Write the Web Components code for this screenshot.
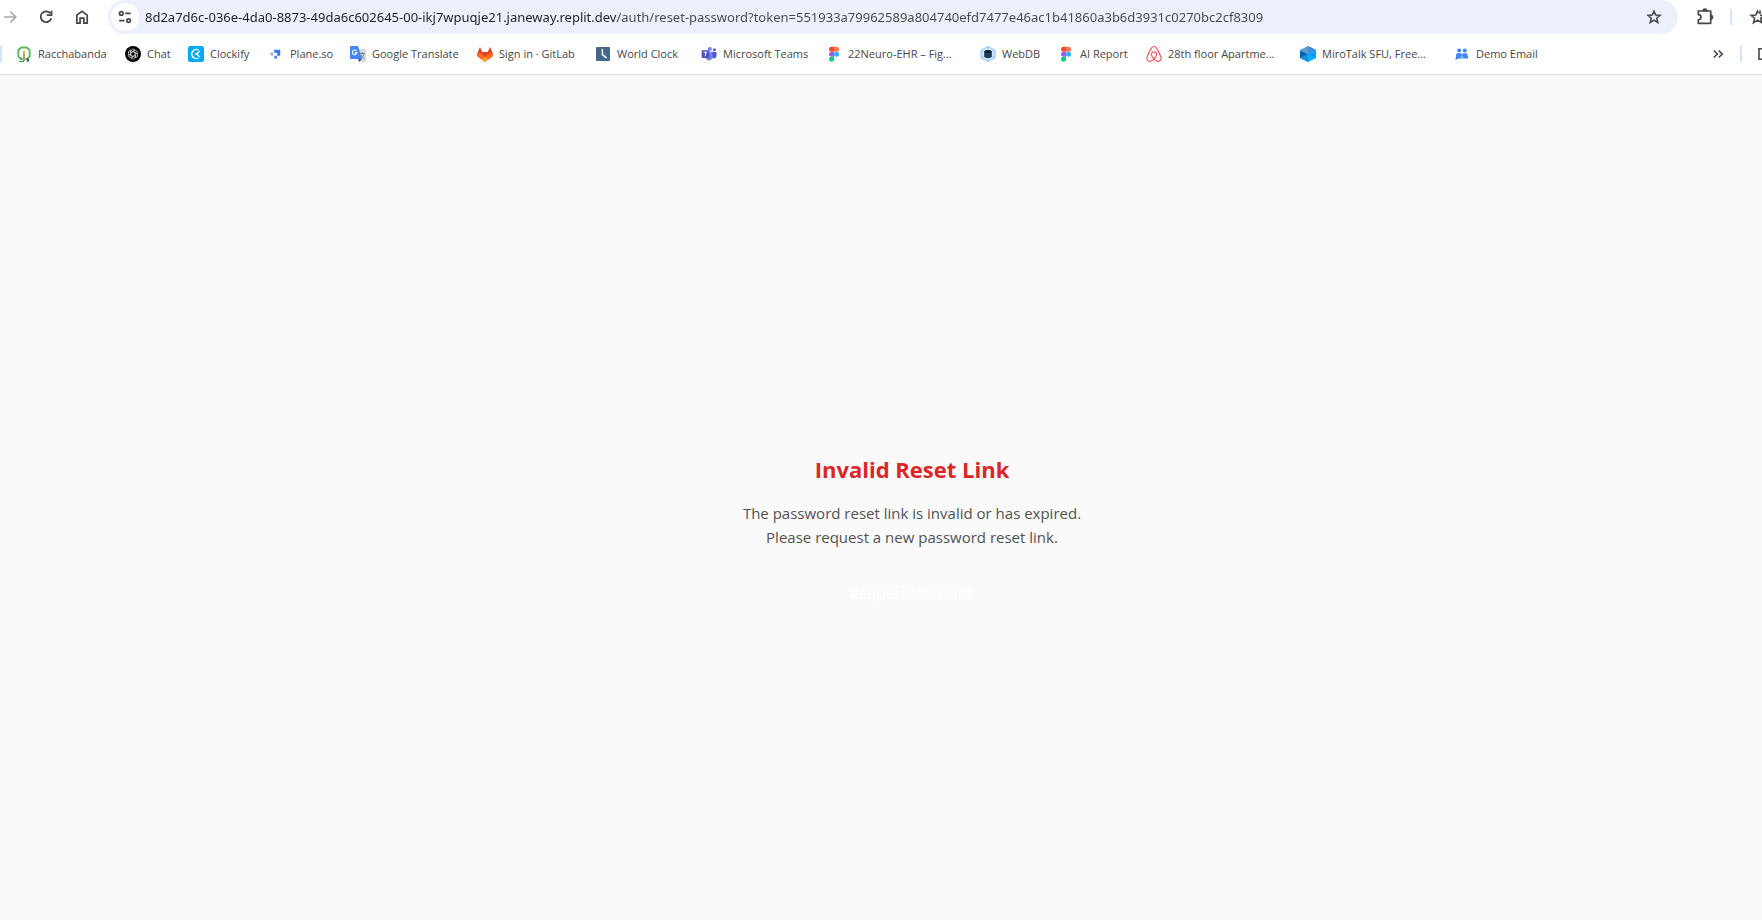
<!DOCTYPE html>
<html lang="en">
<head>
<meta charset="utf-8">
<title>Reset password</title>
<style>
html, body { height: 100%; margin: 0; }
body { background: #fafafa; font-family: "Segoe UI", "Open Sans", "Noto Sans", sans-serif; }
</style>
</head>
<body>
<browser-window></browser-window>

<template id="t-window">
<style>
:host { display: flex; flex-direction: column; min-height: 100%; overflow: hidden; }
header { background: #fff; border-bottom: 1px solid #dddfe1; overflow: hidden; }
reset-notice { flex: 1; }
</style>
<header><address-row></address-row><bookmark-bar></bookmark-bar></header>
<reset-notice>
  <span slot="title">Invalid Reset Link</span>
  <span slot="reason">The password reset link is invalid or has expired.</span>
  <span slot="advice">Please request a new password reset link.</span>
  <span slot="action">Request New Link</span>
</reset-notice>
</template>

<template id="t-address">
<style>
:host { display: flex; height: 34px; margin-left: -8px; }
button { flex: none; width: 36px; height: 34px; padding: 0; border: 0; background: none; display: grid; place-items: center; color: #474747; }
button:disabled { color: #a9a9a9; }
svg { width: 20px; height: 20px; fill: none; stroke: currentColor; stroke-width: 2; }
form { flex: 1; min-width: 0; display: flex; align-items: center; margin-left: 8px; padding-left: 3px; border-radius: 17px; background: #ecf0fa; }
form .site { width: 28px; height: 28px; border-radius: 50%; background: #fff; margin-right: 6px; }
form .fav { margin-right: 6px; }
/* The host part of the address is darker than its path. */
input { flex: 1; min-width: 0; height: 34px; padding: 0; border: 0; outline: 0; font: 13px/20px "Segoe UI", "Noto Sans", sans-serif; color: #474747; background: linear-gradient(to right, #1f1f1f 472px, #474747 472px); -webkit-background-clip: text; background-clip: text; -webkit-text-fill-color: transparent; }
.tools { flex: none; width: 84px; display: flex; align-items: center; }
.tools button:first-child { margin-left: 9px; }
i { flex: none; width: 2px; height: 16px; margin: 0 8px 0 7px; background: #d3e3fd; }
</style>
<button disabled aria-label="Forward"><svg viewBox="0 0 20 20" style="stroke-width:1.7"><path d="M4 10H15.5M10.3 4.5 15.8 10 10.3 15.5"/></svg></button>
<button aria-label="Reload"><svg viewBox="0 0 20 20" style="stroke-width:1.8"><path d="M14.3 6.3A5.4 5.4 0 1 0 15.3 11.2M15.5 3.8V8.2H10.8"/></svg></button>
<button aria-label="Home"><svg viewBox="0 0 20 20" style="stroke-width:1.7"><path d="M4.8 16.2V8.1L10 4.2 15.2 8.1V16.2H11.9V11.2H8.1V16.2Z"/></svg></button>
<form>
  <button type="button" class="site" aria-label="Site information"><svg viewBox="0 0 20 20" style="stroke-width:1.7"><circle cx="6.3" cy="6.4" r="1.8"/><path d="M10.2 6.4H15.7M4.2 13.6H9.5"/><circle cx="13.6" cy="13.6" r="1.8"/></svg></button>
  <input aria-label="Address" spellcheck="false" value="8d2a7d6c-036e-4da0-8873-49da6c602645-00-ikj7wpuqje21.janeway.replit.dev/auth/reset-password?token=551933a79962589a804740efd7477e46ac1b41860a3b6d3931c0270bc2cf8309">
  <button type="button" class="fav" aria-label="Bookmark this page"><svg viewBox="0 0 20 20" style="stroke-width:1.5"><path d="M10 4.1 11.7 8.1 16 8.4 12.7 11.2 13.8 15.5 10 13.1 6.2 15.5 7.3 11.2 4 8.4 8.3 8.1Z"/></svg></button>
</form>
<div class="tools">
  <button aria-label="Extensions"><svg viewBox="0 0 20 20" style="stroke-width:1.7"><path d="M3.3 4H15.7V16.3H3.3V12.8C6.9 12.8 6.9 7.6 3.3 7.6Z" stroke-linejoin="round"/><path d="M8 3.5A2 1.9 0 0 1 11.8 3.5ZM16.3 8.3A1.9 2 0 0 1 16.3 12Z" fill="currentColor"/></svg></button>
  <i></i>
  <button aria-label="Favourites"><svg viewBox="0 0 20 20" style="stroke-width:1.6"><path d="M12 8.2 16 8.6 12.7 11.4 13.8 15.8 9.5 13.1 5.5 15.8 6.6 11.2 3.2 8.4 7.8 8.1 9.5 4.1 10.4 6.3M12 3.5V7M14.7 3.5V7"/></svg></button>
</div>
</template>

<template id="t-bookmarks">
<style>
:host { display: flex; align-items: center; height: 40px; }
i { flex: none; width: 2px; height: 16px; background: #d3e3fd; }
nav { flex: 1; min-width: 0; margin-left: 14px; display: grid; grid-template-columns: 109px 63px 80px 82px 127px 118px 106px 125px 154px 78px 88px 154px 154px 110px; }
svg { display: block; width: 16px; height: 16px; }
button { flex: none; padding: 0; border: 0; background: none; color: #474747; width: 28px; height: 28px; display: grid; place-items: center; }
button svg { fill: none; stroke: currentColor; stroke-width: 1.6; }
.more { margin-right: 8px; }
.end { flex: none; width: 22px; display: flex; align-items: center; }
.end button { width: 32px; margin-left: 8px; }
</style>
<i></i>
<nav aria-label="Bookmarks">
<bookmark-link><svg slot="icon" viewBox="0 0 16 16"><path d="M6 12.2H4.2L2.4 10.5V4L5.2 1.5H10.8L13.6 4V10.5L12 12.2H10.8" fill="none" stroke="#5dbb63" stroke-width="2"/><path d="M8 4.2C9.3 5.5 9.3 7 8.8 8H7.2C6.7 7 6.7 5.5 8 4.2Z" fill="#f5a623"/><path d="M7.2 8H8.8V15H7.2Z" fill="#7a9a3c"/><path d="M3 15.4H8M4 13.2H7" stroke="#4aa866" stroke-width="1.2"/><circle cx="10.2" cy="13" r="1" fill="#e24b3b"/><path d="M10.8 13H13V15.6H10.8Z" fill="#12606a"/></svg>Racchabanda</bookmark-link>
<bookmark-link><svg slot="icon" viewBox="0 0 16 16"><circle cx="8" cy="8" r="8"/><g fill="none" stroke="#ddd" stroke-width=".8"><path d="M6 8.8V5.2A2.2 2.2 0 0 1 10 4L7 5.8"/><path transform="rotate(60 8 8)" d="M6 8.8V5.2A2.2 2.2 0 0 1 10 4L7 5.8"/><path transform="rotate(120 8 8)" d="M6 8.8V5.2A2.2 2.2 0 0 1 10 4L7 5.8"/><path transform="rotate(180 8 8)" d="M6 8.8V5.2A2.2 2.2 0 0 1 10 4L7 5.8"/><path transform="rotate(240 8 8)" d="M6 8.8V5.2A2.2 2.2 0 0 1 10 4L7 5.8"/><path transform="rotate(300 8 8)" d="M6 8.8V5.2A2.2 2.2 0 0 1 10 4L7 5.8"/></g></svg>Chat</bookmark-link>
<bookmark-link><svg slot="icon" viewBox="0 0 16 16"><rect width="16" height="16" rx="2.5" fill="#03a9f4"/><path d="M10.6 4A4.6 4.6 0 1 0 10.6 12" fill="none" stroke="#fff" stroke-width="1.4"/><path d="M11.8 5 8.6 8 11.8 11" fill="none" stroke="#fff" stroke-width="1.3"/><circle cx="8.2" cy="8" r="1" fill="#fff"/></svg>Clockify</bookmark-link>
<bookmark-link><svg slot="icon" viewBox="0 0 16 16"><path d="M6.2 3.7H12.2V9.8H9.2V6.7H6.2Z" fill="#3f76ff"/><path d="M2.5 6.7H5.2V9.4H2.5Z" fill="#84a9ff"/><path d="M6.2 9.7H9.2V12.7H6.2Z" fill="#5b89ff"/></svg>Plane.so</bookmark-link>
<bookmark-link><svg slot="icon" viewBox="0 0 16 16"><path d="M6 3H15A1 1 0 0 1 16 4V15A1 1 0 0 1 15 16H9Z" fill="#dadada"/><path d="M9.5 7.4H15M12.2 6V7.5M14 7.5C13.5 10 12 11.5 10.2 12.4M10.8 8.8C11.5 10.5 13 12 14.6 12.7" fill="none" stroke="#71808a" stroke-width="1"/><path d="M1 0H8L12 13H1A1 1 0 0 1 0 12V1A1 1 0 0 1 1 0Z" fill="#4285f4"/><path d="M8.3 13H12L9 16Z" fill="#3050b8"/><path d="M6.5 4.8A2.3 2.3 0 1 0 7 6.6H4.8" fill="none" stroke="#fff" stroke-width="1.1"/></svg>Google Translate</bookmark-link>
<bookmark-link><svg slot="icon" viewBox="0 0 16 16"><path d="M3 1 5.2 6H10.8L13 1 15.7 7.2C16.2 9 15.6 10.3 14.4 11.2L8 15.8 1.6 11.2C.4 10.3-.2 9 .3 7.2Z" fill="#e24329"/><path d="M.3 7.2 3 6.7 8 11 13 6.7 15.7 7.2C16.2 9 15.6 10.3 14.4 11.2L8 15.8 1.6 11.2C.4 10.3-.2 9 .3 7.2Z" fill="#fc6d26"/><path d="M4.6 13.4 8 10.8 11.4 13.4 8 15.8Z" fill="#fca326"/></svg>Sign in · GitLab</bookmark-link>
<bookmark-link><svg slot="icon" viewBox="0 0 16 16"><rect x="1" y="1" width="14" height="14" rx="1" fill="#456789"/><path d="M7.4 3V8.6L11.6 11.8" fill="none" stroke="#fff" stroke-width="1.5"/></svg>World Clock</bookmark-link>
<bookmark-link><svg slot="icon" viewBox="0 0 16 16"><circle cx="8.8" cy="3" r="2.1" fill="#7b83eb"/><circle cx="13.4" cy="3.8" r="1.5" fill="#5059c9"/><path d="M6 5.7H12V11A4 4 0 0 1 5 13Z" fill="#7b83eb"/><path d="M11.5 6H15.5V9.8A2.6 2.6 0 0 1 11.5 12Z" fill="#5059c9"/><rect x=".7" y="4.3" width="7.6" height="7.6" rx=".6" fill="#4b53bc"/><path d="M2.6 6.3H6.4M4.5 6.3V10.2" stroke="#fff" stroke-width="1"/></svg>Microsoft Teams</bookmark-link>
<bookmark-link><svg slot="icon" viewBox="0 0 16 16"><path d="M8 .8H5.5A2.5 2.5 0 0 0 5.5 5.8H8Z" fill="#f24e1e"/><path d="M8 .8H10.5A2.5 2.5 0 0 1 10.5 5.8H8Z" fill="#ff7262"/><path d="M8 5.8H5.5A2.5 2.5 0 0 0 5.5 10.8H8Z" fill="#a259ff"/><circle cx="10.5" cy="8.3" r="2.5" fill="#1abcfe"/><path d="M8 10.8H5.5A2.5 2.5 0 1 0 8 13.3Z" fill="#0acf83"/></svg>22Neuro-EHR – Fig...</bookmark-link>
<bookmark-link><svg slot="icon" viewBox="0 0 16 16"><path d="M8 .5 15 4.2V11.8L8 15.5 1 11.8V4.2Z" fill="#cfe6fb" stroke="#90c4f2"/><path d="M1 4.2 15 11.8M15 4.2 1 11.8M8 .5V15.5" stroke="#90c4f2" stroke-width=".7"/><path d="M4.2 5.5C5 3.8 11 3.8 11.8 5.5V10.8C11 12.4 5 12.4 4.2 10.8Z" fill="#1d3a54"/><ellipse cx="8" cy="5.4" rx="3.6" ry="1.2" fill="#0d1c2b"/></svg>WebDB</bookmark-link>
<bookmark-link><svg slot="icon" viewBox="0 0 16 16"><path d="M8 .8H5.5A2.5 2.5 0 0 0 5.5 5.8H8Z" fill="#f24e1e"/><path d="M8 .8H10.5A2.5 2.5 0 0 1 10.5 5.8H8Z" fill="#ff7262"/><path d="M8 5.8H5.5A2.5 2.5 0 0 0 5.5 10.8H8Z" fill="#a259ff"/><circle cx="10.5" cy="8.3" r="2.5" fill="#1abcfe"/><path d="M8 10.8H5.5A2.5 2.5 0 1 0 8 13.3Z" fill="#0acf83"/></svg>AI Report</bookmark-link>
<bookmark-link><svg slot="icon" viewBox="0 0 16 16"><path d="M8 13.2C6.2 11 5.4 9.6 5.4 8.5A2.6 2.6 0 0 1 10.6 8.5C10.6 9.6 9.8 11 8 13.2ZM8 13.2C6.2 15 4.6 15.7 3 15.2 1.2 14.6.4 13 1 11.2 2 8.6 4.2 4 5.6 1.9 6.8.1 9.2.1 10.4 1.9 11.8 4 14 8.6 15 11.2 15.6 13 14.8 14.6 13 15.2 11.4 15.7 9.8 15 8 13.2Z" fill="none" stroke="#f0555c" stroke-width="1.1"/></svg>28th floor Apartme...</bookmark-link>
<bookmark-link><svg slot="icon" viewBox="0 0 16 16"><path d="M8 0 16 4 8 8 0 4Z" fill="#5b9bd0"/><path d="M8 0 16 4 8 8Z" fill="#3d8ed8"/><path d="M0 4 8 8V16L0 12Z" fill="#0b63b5"/><path d="M16 4 8 8V16L16 12Z" fill="#08a0f5"/><path d="M0 12 8 8 16 12 8 16Z" fill="#18b4ff" opacity=".6"/></svg>MiroTalk SFU, Free...</bookmark-link>
<bookmark-link><svg slot="icon" viewBox="0 0 16 16"><g fill="#4285f4"><circle cx="5.2" cy="4.4" r="2"/><circle cx="10.8" cy="4.4" r="2"/><path d="M2.4 7.2H7L8 8.4 9 7.2H13L14.4 12.5H5L1.5 14Z"/></g><path d="M6 12.5 8 8.2 10 12.5Z" fill="#8ab4f8"/></svg>Demo Email</bookmark-link>
</nav>
<button class="more" aria-label="More bookmarks"><svg viewBox="0 0 16 16"><path d="M3.8 4.5 7.3 8 3.8 11.5M8.7 4.5 12.2 8 8.7 11.5"/></svg></button>
<div class="end"><i></i><button aria-label="All bookmarks"><svg viewBox="0 0 16 16"><path d="M15 13.2H1V2.8H6.5L8.3 4.5H15Z"/></svg></button></div>
</template>

<template id="t-link">
<style>
:host { display: block; }
a { display: flex; align-items: center; gap: 6px; font-size: 11px; line-height: 16px; color: #474747; text-decoration: none; white-space: nowrap; }
</style>
<a href="#"><slot name="icon"></slot><span><slot></slot></span></a>
</template>

<template id="t-notice">
<style>
:host { display: flex; align-items: center; justify-content: center; padding: 70px 0 0 62px; }
section { text-align: center; }
h1 { margin: 0 0 16px; font-size: 22px; line-height: 32px; font-weight: 700; color: #dc2626; }
p { margin: 0 0 24px; font-size: 15px; line-height: 24px; color: #525252; }
p slot { display: block; }
button { height: 40px; padding: 0 16px; border: 0; background: none; font: 500 15px/24px "Segoe UI", "Open Sans", "Noto Sans", sans-serif; color: #fff; }
</style>
<section>
<h1><slot name="title"></slot></h1>
<p><slot name="reason"></slot><slot name="advice"></slot></p>
<button><slot name="action"></slot></button>
</section>
</template>

<script>
const define = (tag, id) => customElements.define(tag, class extends HTMLElement {
  constructor() {
    super();
    this.attachShadow({ mode: "open" }).append(document.getElementById(id).content.cloneNode(true));
  }
});
define("bookmark-link", "t-link");
define("address-row", "t-address");
define("bookmark-bar", "t-bookmarks");
define("reset-notice", "t-notice");
define("browser-window", "t-window");
</script>
</body>
</html>
